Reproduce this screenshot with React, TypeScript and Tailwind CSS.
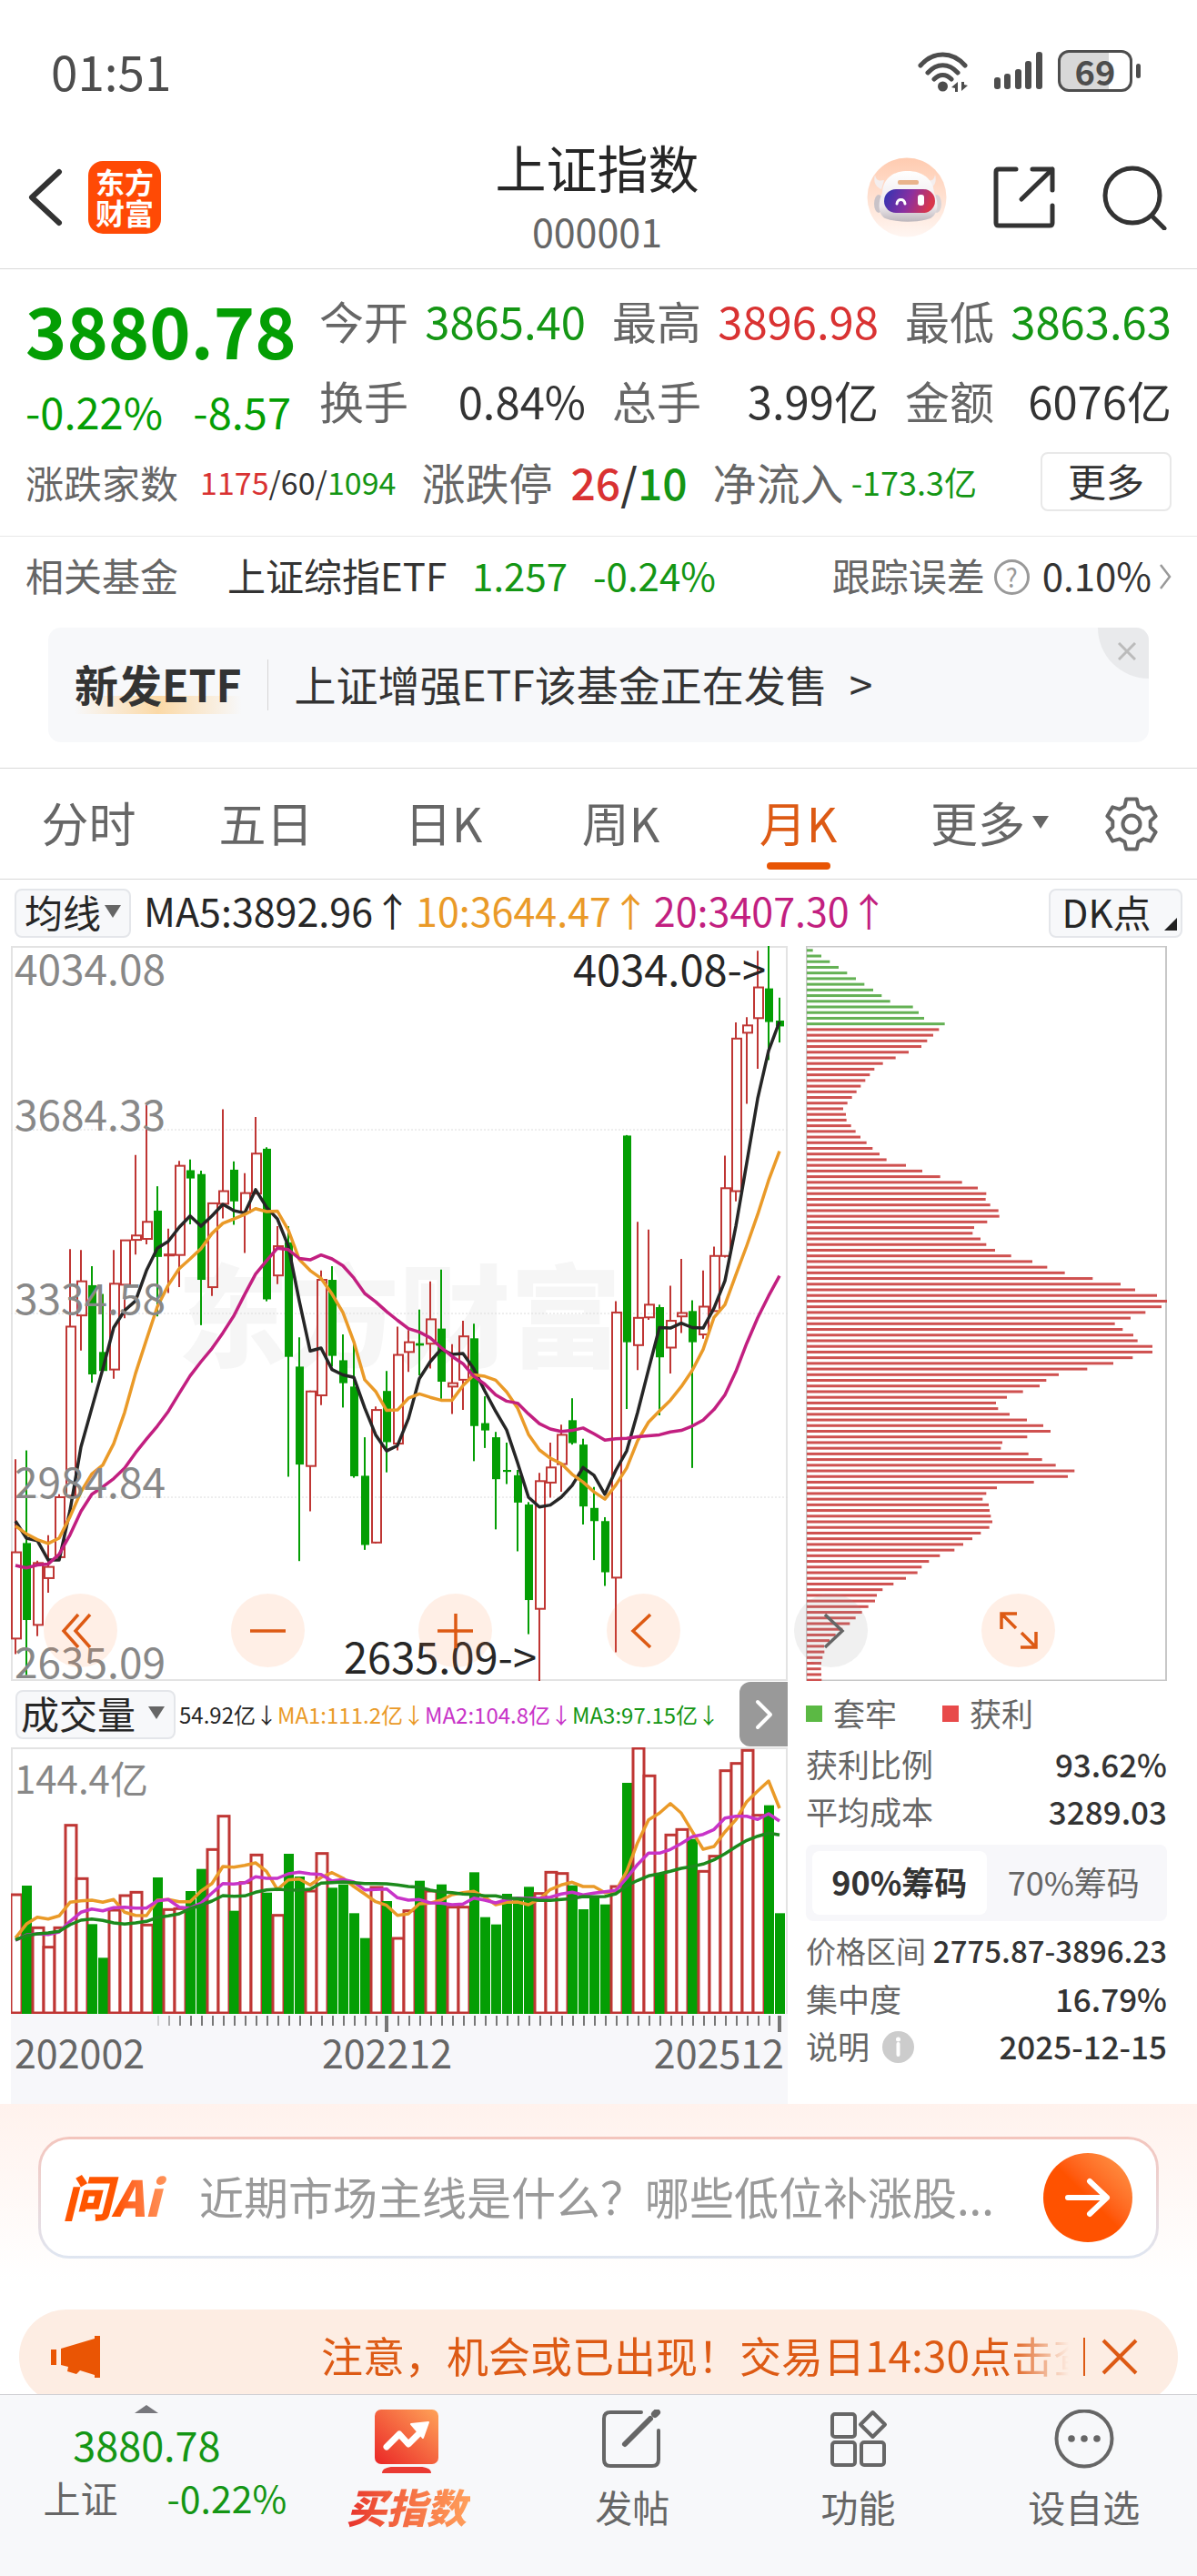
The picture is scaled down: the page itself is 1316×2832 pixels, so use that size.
import { useState } from 'react';

type Candle = [high: number, top: number, bottom: number, low: number, up: 0 | 1];

const STEP = 12;
const RED = '#bf3634';
const GREEN = '#049e04';

// High, body top, body bottom, low, rising; on a 1508 unit tall scale
const candles: Candle[] = [
  [1053, 1244, 1421, 1453, 1], [1035, 1225, 1383, 1496, 0], [1261, 1266, 1393, 1416, 1], [1209, 1274, 1297, 1327, 1],
  [1125, 1131, 1254, 1254, 1], [622, 781, 1128, 1128, 1], [624, 688, 758, 830, 1], [657, 696, 879, 896, 0],
  [714, 833, 872, 872, 0], [624, 693, 869, 888, 1], [604, 604, 695, 764, 1], [429, 594, 603, 633, 1],
  [326, 566, 601, 612, 1], [493, 543, 638, 760, 0], [580, 633, 635, 712, 1], [441, 451, 634, 700, 1],
  [438, 460, 477, 571, 0], [461, 468, 685, 778, 0], [528, 528, 700, 718, 1], [335, 503, 529, 559, 1],
  [442, 459, 524, 572, 0], [466, 507, 546, 630, 1], [351, 426, 508, 508, 1], [413, 416, 725, 729, 0],
  [575, 616, 676, 694, 1], [575, 608, 843, 1089, 0], [803, 863, 1064, 1262, 0], [912, 914, 1067, 1160, 1],
  [666, 685, 922, 942, 1], [657, 685, 841, 863, 0], [797, 850, 897, 947, 0], [813, 904, 1088, 1091, 0],
  [1008, 1087, 1229, 1239, 0], [945, 952, 1224, 1226, 1], [872, 913, 1018, 1080, 0], [781, 839, 1021, 1035, 1],
  [788, 813, 833, 874, 1], [746, 815, 820, 881, 0], [688, 766, 816, 867, 1], [664, 785, 894, 929, 0],
  [817, 897, 904, 960, 1], [769, 801, 890, 952, 1], [775, 805, 985, 1057, 0], [924, 979, 994, 1030, 0],
  [997, 1008, 1094, 1197, 0], [1019, 1075, 1079, 1104, 0], [1075, 1086, 1142, 1242, 0], [1141, 1146, 1342, 1412, 0],
  [1081, 1098, 1360, 1508, 1], [1019, 1070, 1101, 1132, 1], [982, 1003, 1063, 1120, 1], [928, 973, 1020, 1023, 0],
  [1011, 1023, 1150, 1187, 0], [1110, 1153, 1180, 1260, 0], [1172, 1180, 1285, 1313, 0], [729, 752, 1296, 1449, 1],
  [388, 389, 813, 950, 0], [566, 763, 819, 870, 1], [582, 736, 762, 767, 1], [736, 741, 844, 963, 0],
  [697, 769, 824, 877, 1], [642, 753, 760, 794, 1], [727, 749, 813, 1071, 0], [666, 740, 797, 806, 1],
  [617, 636, 749, 749, 1], [430, 497, 636, 639, 1], [157, 190, 503, 524, 1], [146, 163, 178, 324, 1],
  [10, 85, 148, 252, 1], [0, 87, 156, 234, 0], [106, 153, 165, 198, 0],
];

const ma5 = [
  1180, 1215, 1220, 1260, 1260, 1158, 1028, 948, 868, 783, 748, 728, 666, 620, 606, 577, 554, 575, 554, 530, 543, 548, 500, 536,
  560, 616, 728, 831, 825, 869, 880, 885, 948, 1003, 1036, 1025, 970, 888, 853, 827, 838, 836, 868, 913, 955, 993, 1060, 1131,
  1151, 1147, 1131, 1107, 1070, 1086, 1125, 1076, 1036, 957, 869, 783, 784, 774, 783, 784, 743, 687, 575, 445, 313, 215, 155,
];
const ma10 = [
  1190, 1206, 1218, 1226, 1215, 1171, 1120, 1083, 1065, 1021, 957, 877, 808, 740, 696, 662, 642, 621, 590, 569, 560, 551, 539, 545,
  544, 583, 643, 666, 682, 714, 752, 812, 890, 914, 953, 952, 928, 919, 926, 932, 932, 902, 880, 883, 891, 915, 948, 1002,
  1034, 1051, 1062, 1084, 1100, 1120, 1135, 1106, 1071, 1015, 977, 954, 932, 904, 871, 828, 762, 736, 675, 615, 551, 481, 421,
];
const ma20 = [
  1271, 1276, 1270, 1268, 1248, 1208, 1160, 1125, 1110, 1093, 1071, 1040, 1012, 985, 955, 918, 882, 853, 826, 794, 759, 715, 673, 646,
  620, 623, 641, 644, 634, 642, 656, 681, 713, 730, 750, 768, 785, 792, 804, 824, 842, 857, 883, 899, 921, 934, 938, 960,
  980, 991, 996, 994, 989, 1001, 1014, 1011, 1010, 1007, 1005, 1003, 997, 994, 985, 973, 951, 921, 873, 815, 763, 718, 677,
];

// Volume bars and their averages share a 879 unit tall scale, measured from the top
const volumes = [
  483, 456, 592, 656, 592, 254, 430, 583, 694, 534, 486, 475, 583, 429, 532, 529, 474, 401, 334, 224, 539, 443, 352, 479,
  551, 351, 426, 471, 347, 463, 452, 547, 629, 459, 507, 627, 536, 440, 471, 452, 524, 524, 412, 560, 584, 483, 499, 460,
  479, 409, 413, 455, 534, 491, 518, 456, 117, 0, 91, 416, 286, 268, 302, 406, 356, 74, 50, 7, 221, 191, 547,
];
const vol1 = [
  629, 583, 560, 566, 556, 511, 506, 504, 511, 502, 544, 554, 555, 504, 502, 509, 509, 474, 449, 393, 395, 389, 381, 409,
  469, 437, 434, 454, 429, 413, 431, 459, 484, 509, 521, 554, 549, 516, 514, 504, 486, 479, 475, 494, 519, 511, 510, 519,
  501, 469, 454, 445, 459, 459, 479, 474, 409, 314, 239, 217, 185, 217, 277, 336, 327, 279, 239, 179, 144, 111, 201,
];
const vol2 = [
  637, 619, 615, 617, 609, 574, 544, 533, 539, 529, 527, 530, 530, 506, 502, 527, 530, 514, 481, 449, 451, 447, 427, 432,
  432, 417, 412, 417, 419, 441, 436, 444, 470, 469, 467, 496, 504, 502, 513, 514, 519, 517, 497, 504, 513, 502, 497, 498,
  498, 494, 484, 478, 487, 481, 476, 472, 431, 386, 349, 349, 337, 317, 295, 287, 271, 233, 227, 227, 238, 219, 243,
];
const vol3 = [
  635, 621, 615, 612, 607, 585, 570, 566, 571, 579, 583, 579, 574, 561, 556, 549, 532, 521, 507, 489, 491, 490, 478, 470,
  468, 470, 471, 468, 448, 446, 444, 446, 449, 449, 450, 454, 459, 461, 471, 477, 479, 484, 485, 490, 490, 497, 499, 501,
  505, 505, 502, 499, 492, 493, 492, 483, 457, 439, 424, 417, 409, 399, 393, 385, 371, 351, 328, 307, 293, 283, 289,
];

const trapped = [20, 48, 76, 105, 133, 162, 190, 219, 247, 275, 350, 369, 387, 455];
const profit = [
  436, 417, 397, 378, 336, 293, 251, 223, 208, 193, 178, 164, 149, 134, 120, 129, 131, 146, 161, 177, 197, 217, 240, 263, 327,
  381, 440, 512, 564, 592, 590, 605, 632, 635, 595, 552, 547, 573, 592, 621, 674, 744, 793, 851, 943, 1035, 1083, 1155, 1189,
  1170, 1117, 1068, 1016, 1042, 1077, 1091, 1140, 1140, 1075, 1011, 925, 831, 790, 768, 713, 660, 624, 631, 669, 726, 780, 804,
  727, 645, 640, 731, 776, 821, 883, 861, 749, 627, 592, 580, 600, 603, 607, 612, 602, 574, 546, 516, 487, 439, 403, 379, 365,
  327, 286, 250, 231, 225, 203, 182, 161, 142, 118, 95, 75, 57, 58, 52, 48, 47, 48, 49,
];

const cx = (i: number) => 5 + i * STEP;
const priceY = (v: number) => (v * 808) / 1508;
const line = (values: number[], y: (v: number) => number) =>
  values.map((v, i) => `${cx(i)},${y(v).toFixed(1)}`).join(' ');

function CandleChart() {
  return (
    <svg viewBox="0 0 854 808" preserveAspectRatio="none" className="relative block h-[808px] w-full" aria-label="月K线图">
      <rect x="1" y="1" width="852" height="806" fill="none" stroke="#e3e3e3" strokeWidth="2" />
      {[202, 404, 606].map((y) => (
        <line key={y} x1="0" x2="854" y1={y} y2={y} stroke="#dcdcdc" strokeDasharray="2 2" />
      ))}
      {candles.map(([high, top, bottom, low, up], i) => {
        const x = cx(i);
        const t = priceY(top);
        const b = priceY(bottom);
        return up ? (
          <g key={i} stroke={RED} strokeWidth="2" fill="none">
            <line x1={x} x2={x} y1={priceY(high)} y2={t} />
            <rect x={x - 4} y={t} width="10" height={Math.max(b - t, 1)} />
            <line x1={x} x2={x} y1={b} y2={priceY(low)} />
          </g>
        ) : (
          <g key={i} fill={GREEN}>
            <rect x={x - 1} y={priceY(high)} width="2" height={priceY(low - high)} />
            <rect x={x - 4} y={t} width="9" height={Math.max(b - t, 2)} />
          </g>
        );
      })}
      <g fill="none" strokeWidth="3.5" strokeLinejoin="round">
        <polyline points={line(ma5, priceY)} stroke="#262626" />
        <polyline points={line(ma10, priceY)} stroke="#ea9a28" />
        <polyline points={line(ma20, priceY)} stroke="#c21f80" />
      </g>
    </svg>
  );
}

function VolumeChart() {
  const y = (v: number) => v / 3;
  return (
    <svg viewBox="0 0 854 293" preserveAspectRatio="none" className="block h-[293px] w-full" aria-label="成交量图">
      <path d="M1 293V1H853V293" fill="none" stroke="#e3e3e3" strokeWidth="2" />
      {volumes.map((v, i) =>
        candles[i][4] ? (
          <rect key={i} x={cx(i) - 5} y={y(v) + 1} width="12" height={291 - y(v)} fill="#fff" stroke={RED} strokeWidth="3" />
        ) : (
          <rect key={i} x={cx(i) - 5} y={y(v)} width="11" height={293 - y(v)} fill={GREEN} />
        ),
      )}
      <g fill="none" strokeWidth="3.5" strokeLinejoin="round">
        <polyline points={line(vol1, y)} stroke="#ea9a28" />
        <polyline points={line(vol2, y)} stroke="#c834c8" />
        <polyline points={line(vol3, y)} stroke="#1c8a1c" />
      </g>
    </svg>
  );
}

function TimeTicks() {
  return (
    <svg viewBox="0 0 854 22" preserveAspectRatio="none" className="block h-[22px] w-full" aria-hidden="true">
      {volumes.map((_, i) => {
        if (i < 13) return null;
        const major = i === 34 || i === 70;
        return (
          <rect
            key={i}
            x={major ? cx(i) - 2 : cx(i)}
            y="2"
            width={major ? 4 : 2}
            height={major ? 18 : 11}
            fill="#777"
            opacity={Math.min(1, (i - 12) * 0.3)}
          />
        );
      })}
    </svg>
  );
}

function ChipChart() {
  return (
    <svg viewBox="0 0 397 808" preserveAspectRatio="none" className="block h-[808px] w-full" aria-label="筹码分布图">
      <path d="M0.5 0.5H396V807.5H0.5Z" fill="none" stroke="#c8c8c8" strokeWidth="2" />
      {[...trapped, ...profit].map((v, i) => (
        <rect key={i} x="1" y={3.3 + i * 6.22} width={v / 3} height="3" fill={i < trapped.length ? '#64b154' : '#cf5150'} />
      ))}
    </svg>
  );
}

function GearIcon() {
  const points: string[] = [];
  for (let t = 0; t < 6; t++) {
    const mid = -90 + t * 60;
    [[-21, 21], [-12, 28], [12, 28], [21, 21]].forEach(([a, r]) => {
      const rad = ((mid + a) * Math.PI) / 180;
      points.push(`${(30 + r * Math.cos(rad)).toFixed(1)},${(30 + r * Math.sin(rad)).toFixed(1)}`);
    });
  }
  return (
    <svg viewBox="0 0 60 60" className="size-[60px]" fill="none" stroke="#666" strokeWidth="4" strokeLinejoin="round">
      <polygon points={points.join(' ')} />
      <circle cx="30" cy="30" r="9.5" />
    </svg>
  );
}

function StatusBar() {
  return (
    <div className="flex h-[147px] items-center justify-between pt-2 pr-[62px] pl-14 text-[#4d4d4d]">
      <span className="text-[53px] leading-none">01:51</span>
      <div className="flex items-center gap-7">
        <svg viewBox="0 0 56 46" className="h-[46px] w-14" fill="none" stroke="currentColor" strokeWidth="5" strokeLinecap="round">
          <path d="M3 17C17 1 38 1 52 17M11 25C21 14 34 14 44 25M18 32C24 26 31 26 37 32" />
          <circle cx="27.500" cy="40" r="5.500" fill="currentColor" stroke="none" />
          <path d="M37 41l7-6v11h-3v-4zM55 39l-7 6V35h3v3z" fill="currentColor" stroke="none" />
        </svg>
        <svg viewBox="0 0 54 44" className="h-11 w-[54px]" fill="currentColor">
          <rect x="0" y="29" width="7" height="13" rx="3" />
          <rect x="11" y="25" width="7" height="17" rx="3" />
          <rect x="23" y="20" width="7" height="22" rx="3" />
          <rect x="34" y="11" width="7" height="31" rx="3" />
          <rect x="46" y="1" width="7" height="41" rx="3" />
        </svg>
        <div className="-ml-3 flex items-center gap-1">
          <div className="flex h-[46px] w-[82px] items-center justify-center rounded-xl border-[3px] border-[#4d4d4d] bg-linear-to-r from-[#d8d8d8] from-70% to-white to-70%">
            <span className="text-[38px] leading-none font-bold">69</span>
          </div>
          <span className="h-4 w-[5px] rounded-full bg-[#4d4d4d]" />
        </div>
      </div>
    </div>
  );
}

function RobotAvatar() {
  return (
    <svg viewBox="0 0 88 88" className="size-[88px]">
      <defs>
        <linearGradient id="halo" x1="0" y1="0" x2="0" y2="1">
          <stop offset="0" stopColor="#ffcbb0" />
          <stop offset="1" stopColor="#fff6f2" />
        </linearGradient>
        <linearGradient id="visor" x1="0" y1="0" x2="1" y2="0.2">
          <stop offset="0" stopColor="#2c35b4" />
          <stop offset="0.55" stopColor="#8b2fa0" />
          <stop offset="1" stopColor="#d8364c" />
        </linearGradient>
        <linearGradient id="shell" x1="0" y1="0" x2="0" y2="1">
          <stop offset="0" stopColor="#fff" />
          <stop offset="0.7" stopColor="#eee9ec" />
          <stop offset="1" stopColor="#bcb6bc" />
        </linearGradient>
      </defs>
      <circle cx="44" cy="44" r="43.500" fill="url(#halo)" />
      <path d="M9 19c1 7 5 7 10 6l-3 10c-7-3-9-9-7-16zM75 19c-1 7-5 7-10 6l3 10c7-3 9-9 7-16z" fill="#f4eeee" />
      <ellipse cx="13" cy="51" rx="5" ry="10" fill="#c9c3c8" />
      <ellipse cx="77" cy="51" rx="5" ry="10" fill="#d9d3d6" />
      <path d="M17 39C18 22 30 15 45 15s28 8 29 24c6 12 4 23-4 28-14 5-36 5-50 0-8-5-8-17-3-28z" fill="url(#shell)" />
      <rect x="19" y="35" width="56" height="26" rx="13" fill="url(#visor)" />
      <rect x="34" y="25" width="23" height="5" rx="2" fill="#e9b48c" />
      <path d="M33 51c1-6 8-6 9 0" stroke="#fff" strokeWidth="3" fill="none" strokeLinecap="round" />
      <rect x="56" y="41" width="7" height="12" rx="3" fill="#fff" />
    </svg>
  );
}

function Header() {
  return (
    <header className="grid h-[149px] grid-cols-[1fr_auto_1fr] items-center border-b border-[#d9d9d9] pr-[33px] pb-2 pl-[30px]">
      <div className="flex items-center gap-[27px]">
        <button type="button" aria-label="返回">
          <svg viewBox="0 0 40 64" className="h-16 w-10" fill="none" stroke="#333" strokeWidth="6" strokeLinejoin="round" strokeLinecap="round">
            <path d="M35 4L5 32L35 60" />
          </svg>
        </button>
        <a href="#home" className="flex size-20 items-center rounded-2xl bg-[#ff4a05] px-2 pb-0.5 text-[32px] leading-[34px] font-bold text-white">
          东方财富
        </a>
      </div>
      <div className="text-center">
        <h1 className="text-[56px] leading-[72px] text-[#262626]">上证指数</h1>
        <p className="text-[43px] leading-[68px] text-[#666]">000001</p>
      </div>
      <div className="flex items-center justify-end gap-[50px]">
        <button type="button" aria-label="智能助手">
          <RobotAvatar />
        </button>
        <button type="button" aria-label="分享">
          <svg viewBox="0 0 70 70" className="size-[70px]" fill="none" stroke="#333" strokeWidth="5" strokeLinecap="round" strokeLinejoin="round">
            <path d="M26 4H7Q4 4 4 7V63Q4 66 7 66H63Q66 66 66 63V44M44 4H66V27M66 4L32 37" />
          </svg>
        </button>
        <button type="button" aria-label="搜索">
          <svg viewBox="0 0 72 72" className="size-[72px]" fill="none" stroke="#333" strokeWidth="5" strokeLinecap="round">
            <circle cx="34" cy="34" r="30" />
            <path d="M56 57L69 70" />
          </svg>
        </button>
      </div>
    </header>
  );
}

const quotes = [
  { label: '今开', value: '3865.40', color: 'text-[#149614]' },
  { label: '最高', value: '3896.98', color: 'text-[#d93232]' },
  { label: '最低', value: '3863.63', color: 'text-[#149614]' },
  { label: '换手', value: '0.84%', color: 'text-[#333]' },
  { label: '总手', value: '3.99亿', color: 'text-[#333]' },
  { label: '金额', value: '6076亿', color: 'text-[#333]' },
];

function QuotePanel() {
  return (
    <section className="border-b border-[#e8e8e8] px-7 pt-3 pb-[27px]">
      <div className="flex gap-[31px]">
        <div className="w-[292px] pt-3 text-[#049e04]">
          <div className="text-[77px] leading-[84px] font-bold">3880.78</div>
          <div className="mt-4 flex justify-between text-[47px] leading-[64px]">
            <span>-0.22%</span>
            <span>-8.57</span>
          </div>
        </div>
        <dl className="grid flex-1 grid-cols-3 gap-x-[29px] text-[49px] leading-[88px]">
          {quotes.map((q) => (
            <div key={q.label} className="flex justify-between whitespace-nowrap">
              <dt className="text-[#666]">{q.label}</dt>
              <dd className={q.color}>{q.value}</dd>
            </div>
          ))}
        </dl>
      </div>
      <div className="mt-[13px] flex h-[65px] items-center text-[48px] leading-[65px] whitespace-nowrap text-[#666]">
        <span className="text-[42px]">涨跌家数</span>
        <span className="ml-6 text-[34px] text-[#333]">
          <span className="text-[#d93232]">1175</span>/60/<span className="text-[#149614]">1094</span>
        </span>
        <span className="ml-7">涨跌停</span>
        <span className="ml-5 font-medium text-[#333]">
          <span className="text-[#d93232]">26</span>/<span className="text-[#149614]">10</span>
        </span>
        <span className="ml-7">净流入</span>
        <span className="ml-2 text-[36px] text-[#149614]">-173.3亿</span>
        <button type="button" className="ml-auto h-[65px] w-[144px] rounded-lg border-2 border-[#e8e8e8] pb-1 text-[42px] leading-none text-[#333]">
          更多
        </button>
      </div>
    </section>
  );
}

function FundRow() {
  return (
    <a href="#fund" className="flex h-[84px] items-center px-7 text-[42px] leading-none text-[#333]">
      <span className="text-[#666]">相关基金</span>
      <span className="ml-[54px]">上证综指ETF</span>
      <span className="ml-7 text-[#149614]">1.257</span>
      <span className="ml-7 text-[#149614]">-0.24%</span>
      <span className="ml-auto text-[#666]">跟踪误差</span>
      <span className="mt-1 ml-2.5 flex size-[39px] items-center justify-center rounded-full border-[3px] border-[#999] text-[28px] text-[#999]">?</span>
      <span className="ml-3.5">0.10%</span>
      <svg viewBox="0 0 14 30" className="mt-1 ml-2 h-[30px] w-[14px]" fill="none" stroke="#999" strokeWidth="2.500">
        <path d="M2 2L12 15L2 28" />
      </svg>
    </a>
  );
}

function Promo() {
  return (
    <div className="relative mx-[53px] mt-4 mb-7 flex h-[126px] items-center overflow-hidden rounded-[14px] bg-[#f7f8fa] pl-[29px] text-[46px] leading-none text-[#333]">
      <strong className="bg-linear-to-r from-[#f7f8fa] via-[#fbd9a6] to-[#f7f8fa] bg-[length:100%_20px] bg-bottom bg-no-repeat pt-1.5 pb-2.5 text-[48px]">新发ETF</strong>
      <span className="mr-[29px] ml-7 h-14 w-px bg-[#d5d5d5]" />
      <a href="#etf" className="pb-1">
        上证增强ETF该基金正在发售<span className="ml-6">&gt;</span>
      </a>
      <button type="button" aria-label="关闭" className="absolute top-0 right-0 flex size-14 items-center justify-center rounded-bl-[56px] bg-[#e9eaec]">
        <svg viewBox="0 0 20 20" className="mb-1 ml-2 size-5" stroke="#bbb" strokeWidth="3">
          <path d="M1 1L19 19M19 1L1 19" />
        </svg>
      </button>
    </div>
  );
}

const periods = ['分时', '五日', '日K', '周K', '月K'];

function PeriodTabs() {
  const [active, setActive] = useState('月K');
  return (
    <nav className="flex h-[123px] items-center border-y border-[#d9d9d9] pr-[42px] text-[52px] leading-none text-[#666]">
      {periods.map((p) => (
        <button
          key={p}
          type="button"
          onClick={() => setActive(p)}
          className={`relative h-full flex-1 pb-1 ${p === active ? 'text-[#dd5a14]' : ''}`}
        >
          {p}
          {p === active && <span className="absolute bottom-2.5 left-1/2 h-2 w-[70px] -translate-x-1/2 rounded-full bg-[#e85504]" />}
        </button>
      ))}
      <button type="button" className="ml-12 flex h-full items-center gap-2 pb-1">
        更多
        <svg viewBox="0 0 18 14" className="h-3.5 w-[18px]" fill="#666">
          <path d="M0 0H18L9 14Z" />
        </svg>
      </button>
      <button type="button" aria-label="设置" className="ml-[61px]">
        <GearIcon />
      </button>
    </nav>
  );
}

function AverageRow() {
  return (
    <div className="flex h-[73px] items-center px-4 text-[43px] leading-none whitespace-nowrap">
      <button type="button" className="flex h-[54px] w-32 items-center justify-center gap-1 rounded-lg border-2 border-[#e4e6ea] bg-[#f7f8fa] pb-1 text-[42px] text-[#262626]">
        均线
        <svg viewBox="0 0 18 14" className="h-3.5 w-[18px]" fill="#666">
          <path d="M0 0H18L9 14Z" />
        </svg>
      </button>
      <span className="ml-3.5 pb-1.5 text-[#262626]">MA5:3892.96↑</span>
      <span className="ml-1 pb-1.5 text-[#ea9a28]">10:3644.47↑</span>
      <span className="ml-1 pb-1.5 text-[#c21f80]">20:3407.30↑</span>
      <button type="button" className="relative ml-auto h-[54px] w-[147px] rounded-lg border-2 border-[#e4e6ea] bg-[#f7f8fa] pr-5 pb-1 text-[42px] text-[#262626]">
        DK点
        <svg viewBox="0 0 14 14" className="absolute right-1 bottom-1.5 size-3.5" fill="#222">
          <path d="M14 0V14H0Z" />
        </svg>
      </button>
    </div>
  );
}

const controls = [
  { label: '最早', d: 'M38 23L22 41L38 59M51 23L35 41L51 59' },
  { label: '缩小', d: 'M21 41H60' },
  { label: '放大', d: 'M21 41H60M41 22V60' },
  { label: '向左', d: 'M48 23L29 41L48 59' },
  { label: '向右', d: 'M34 23L53 41L34 59' },
  { label: '全屏', d: 'M39 22H22V39M23 23L38 38M43 59H60V42M59 58L44 43' },
];

function ChartControls() {
  return (
    <div className="absolute top-[712px] right-[156px] left-12 flex justify-between">
      {controls.map((c) => (
        <button
          key={c.label}
          type="button"
          aria-label={c.label}
          className={`size-[81px] rounded-full ${c.label === '向右' ? 'bg-[#999]/15 text-[#666]' : 'bg-[#ff7a30]/12 text-[#dd5a14]'}`}
        >
          <svg viewBox="0 0 81 81" className="size-full" fill="none" stroke="currentColor" strokeWidth="3.500">
            <path d={c.d} />
          </svg>
        </button>
      ))}
    </div>
  );
}

function PriceColumn() {
  return (
    <div className="min-w-0 flex-1">
      <div className="relative text-[46px] leading-none text-[#888]">
        <div className="absolute inset-0 flex items-center justify-center pb-2 text-[122px] font-black text-[#f6f6f6]">东方财富</div>
        <CandleChart />
        <span className="absolute top-0 left-1">4034.08</span>
        <span className="absolute top-[160px] left-1">3684.33</span>
        <span className="absolute top-[362px] left-1">3334.58</span>
        <span className="absolute top-[564px] left-1">2984.84</span>
        <span className="absolute top-[762px] left-1">2635.09</span>
        <span className="absolute top-0 right-6 text-[47px] text-[#262626]">4034.08-&gt;</span>
        <span className="absolute top-[756px] right-[276px] text-[47px] text-[#262626]">2635.09-&gt;</span>
      </div>
      <div className="flex h-[73px] items-center pl-[5px] text-[24px] leading-none whitespace-nowrap">
        <button type="button" className="flex h-[54px] w-44 items-center justify-between rounded-lg border-2 border-[#e4e6ea] bg-[#f7f8fa] pr-2.5 pb-1 pl-1 text-[42px] text-[#262626]">
          成交量
          <svg viewBox="0 0 18 14" className="h-3.5 w-[18px]" fill="#666">
            <path d="M0 0H18L9 14Z" />
          </svg>
        </button>
        <span className="ml-1 text-[#262626]">54.92亿↓</span>
        <span className="text-[#ea9a28]">MA1:111.2亿↓</span>
        <span className="text-[#c834c8]">MA2:104.8亿↓</span>
        <span className="text-[#149614]">MA3:97.15亿↓</span>
        <button type="button" aria-label="展开" className="ml-auto flex h-[71px] w-[53px] items-center justify-center rounded-l-xl bg-[#999]">
          <svg viewBox="0 0 20 34" className="h-[34px] w-5" fill="none" stroke="#fff" strokeWidth="4" strokeLinecap="round" strokeLinejoin="round">
            <path d="M3 3L17 17L3 31" />
          </svg>
        </button>
      </div>
      <div className="relative">
        <VolumeChart />
        <span className="absolute top-3 left-1 text-[42px] leading-none text-[#888]">144.4亿</span>
      </div>
      <div className="h-[99px] bg-[#f7f7fa]">
        <TimeTicks />
        <div className="grid grid-cols-[100fr_auto_108fr] px-1 text-[43px] leading-[38px] text-[#666]">
          <span>202002</span>
          <span>202212</span>
          <span className="text-right">202512</span>
        </div>
      </div>
    </div>
  );
}

function StatRow({ label, value, tight = false }: { label: string; value: string; tight?: boolean }) {
  return (
    <div className={`flex h-[52px] items-center justify-between whitespace-nowrap ${tight ? 'text-[33px]' : 'text-[35px]'}`}>
      <dt className="flex items-center text-[#666]">
        {label}
        {label === '说明' && (
          <svg viewBox="0 0 35 35" className="mt-1 ml-3.5 size-[35px]">
            <circle cx="17.500" cy="17.500" r="17.500" fill="#ccc" />
            <path d="M17.500 14V26" stroke="#fff" strokeWidth="4" strokeLinecap="round" />
            <circle cx="17.500" cy="9" r="2.500" fill="#fff" />
          </svg>
        )}
      </dt>
      <dd className="font-medium text-[#333]">{value}</dd>
    </div>
  );
}

function ChipColumn() {
  return (
    <div className="w-[397px] text-[35px] leading-none">
      <ChipChart />
      <div className="flex h-16 items-center pt-1 text-[#666]">
        <span className="mt-1 mr-3 size-[18px] bg-[#5bb944]" />
        套牢
        <span className="mt-1 mr-3 ml-[50px] size-[18px] bg-[#e84a4a]" />
        获利
      </div>
      <dl>
        <StatRow label="获利比例" value="93.62%" />
        <StatRow label="平均成本" value="3289.03" />
      </dl>
      <div className="mt-3 mb-1.5 flex h-[84px] rounded-lg bg-[#f7f7fa] p-[7px] text-[36px]">
        <button type="button" className="flex-1 rounded-lg bg-white pb-1 font-bold text-[#333]">90%筹码</button>
        <button type="button" className="flex-1 pb-1 text-[#666]">70%筹码</button>
      </div>
      <dl>
        <StatRow label="价格区间" value="2775.87-3896.23" tight />
        <StatRow label="集中度" value="16.79%" />
        <StatRow label="说明" value="2025-12-15" />
      </dl>
    </div>
  );
}

function AskBar() {
  return (
    <section className="bg-linear-to-b from-[#fff2ed] to-white px-[42px] pt-9 pb-6">
      <div className="rounded-[34px] bg-linear-to-b from-[#f3c5bd] to-[#dfe6f1] p-[3px]">
        <form className="flex h-32 items-center rounded-[31px] bg-white pr-[26px] pl-6" onSubmit={(e) => e.preventDefault()}>
          <span className="w-[122px] bg-linear-to-r from-[#ff5500] from-50% to-[#ff9a60] bg-clip-text pb-1 text-[54px] leading-[72px] font-black text-transparent italic">
            问Ai
          </span>
          <input
            type="text"
            aria-label="问AI"
            placeholder="近期市场主线是什么？哪些低位补涨股..."
            className="mr-10 ml-7 h-20 min-w-0 flex-1 bg-transparent pb-1.5 text-[49px] outline-none placeholder:text-[#999]"
          />
          <button type="submit" aria-label="发送" className="flex size-[98px] items-center justify-center rounded-full bg-linear-to-tr from-[#ff5200] from-50% to-[#ff9a4a]">
            <svg viewBox="0 0 50 44" className="h-11 w-[50px]" fill="none" stroke="#fff" strokeWidth="6" strokeLinecap="round" strokeLinejoin="round">
              <path d="M3 22H46M27 4L46 22L27 40" />
            </svg>
          </button>
        </form>
      </div>
    </section>
  );
}

function Notice() {
  return (
    <div className="mx-[21px] mt-8 -mb-[11px] flex h-[104px] items-center rounded-full bg-[#fdede3] pr-11 pl-[35px] text-[46px] leading-[64px] text-[#dd5a14]">
      <svg viewBox="0 0 54 48" className="h-12 w-[54px]" fill="#ea5504">
        <path d="M0 16H6V33H0zM11 15L48 4V1H54V47H48V44L32 39L28 43L18 40L19 35L11 33Z" />
      </svg>
      <div className="mr-4 ml-[243px] flex-1 overflow-hidden mask-r-from-92% pb-1.5 whitespace-nowrap">
        注意，机会或已出现！交易日14:30点击查看
      </div>
      <span className="h-[42px] w-0.5 bg-[#dd5a14]" />
      <button type="button" aria-label="关闭提示" className="ml-[18px]">
        <svg viewBox="0 0 40 40" className="size-10" stroke="#dd5a14" strokeWidth="4">
          <path d="M2 2L38 38M38 2L2 38" />
        </svg>
      </button>
    </div>
  );
}

function BottomNav() {
  return (
    <nav className="relative grid h-[200px] grid-cols-[13fr_10fr_10fr_10fr_10fr] border-t border-[#d0d0d4] bg-[#f7f8fa] text-[41px] leading-[60px] text-[#666]">
      <a href="#index" className="pt-[11px] text-[#149614]">
        <svg viewBox="0 0 26 9" className="mx-auto h-[9px] w-[26px]" fill="#77777c">
          <path d="M13 0L26 9H0Z" />
        </svg>
        <span className="mt-1 block text-center text-[45px]">3880.78</span>
        <span className="flex justify-center gap-[54px] pl-10 leading-[56px]">
          <span className="text-[#666]">上证</span>
          <span>-0.22%</span>
        </span>
      </a>
      <a href="#buy" className="flex flex-col items-center pt-4">
        <svg viewBox="0 0 70 70" className="size-[70px]">
          <defs>
            <linearGradient id="buy" x1="0" y1="1" x2="1" y2="0">
              <stop offset="0" stopColor="#ea2626" />
              <stop offset="1" stopColor="#ffa358" />
            </linearGradient>
          </defs>
          <rect width="70" height="60" rx="7" fill="url(#buy)" />
          <path d="M8 70C8 65 14 63 20 63H50C56 63 62 65 62 70Z" fill="#ea3a33" />
          <path d="M13 41L27 27L37 38L50 25" fill="none" stroke="#fff" strokeWidth="7" strokeLinecap="round" strokeLinejoin="round" />
          <path d="M40 16L59 14L53 31Z" fill="#fff" stroke="#fff" strokeWidth="2" strokeLinejoin="round" />
        </svg>
        <span className="mt-1.5 bg-linear-to-r from-[#e62a2a] to-[#ffa05c] bg-clip-text px-1 text-[44px] font-black text-transparent italic">买指数</span>
      </a>
      <a href="#post" className="flex flex-col items-center pt-4">
        <svg viewBox="0 0 70 70" className="size-[70px]" fill="none" stroke="#666" strokeWidth="4" strokeLinecap="round">
          <path d="M45 3H11Q4 3 4 10V55Q4 62 11 62H57Q64 62 64 55V23" />
          <path d="M27 38L55 10" strokeWidth="6" />
          <path d="M60 5L62 3" strokeWidth="8" />
        </svg>
        <span className="mt-1.5">发帖</span>
      </a>
      <a href="#tools" className="flex flex-col items-center pt-4">
        <svg viewBox="0 0 70 70" className="size-[70px]" fill="none" stroke="#666" strokeWidth="4" strokeLinejoin="round">
          <rect x="6" y="5" width="25" height="25" rx="3" />
          <rect x="6" y="36" width="25" height="25" rx="3" />
          <rect x="38" y="36" width="25" height="25" rx="3" />
          <path d="M50.500 3L64 16.500L50.500 30L37 16.500Z" />
        </svg>
        <span className="mt-1.5">功能</span>
      </a>
      <a href="#watchlist" className="flex flex-col items-center pt-4">
        <svg viewBox="0 0 70 70" className="size-[70px]" fill="#666">
          <circle cx="35" cy="32" r="30.500" fill="none" stroke="#666" strokeWidth="4" />
          <circle cx="21" cy="32" r="3.800" />
          <circle cx="35" cy="32" r="3.800" />
          <circle cx="49" cy="32" r="3.800" />
        </svg>
        <span className="mt-1.5">设自选</span>
      </a>
    </nav>
  );
}

export default function App() {
  return (
    <div className="overflow-hidden bg-white font-['Noto_Sans_CJK_SC',sans-serif]">
      <StatusBar />
      <Header />
      <QuotePanel />
      <FundRow />
      <Promo />
      <PeriodTabs />
      <AverageRow />
      <main className="relative flex gap-5 pr-[33px] pl-3">
        <PriceColumn />
        <ChipColumn />
        <ChartControls />
      </main>
      <AskBar />
      <Notice />
      <BottomNav />
    </div>
  );
}
